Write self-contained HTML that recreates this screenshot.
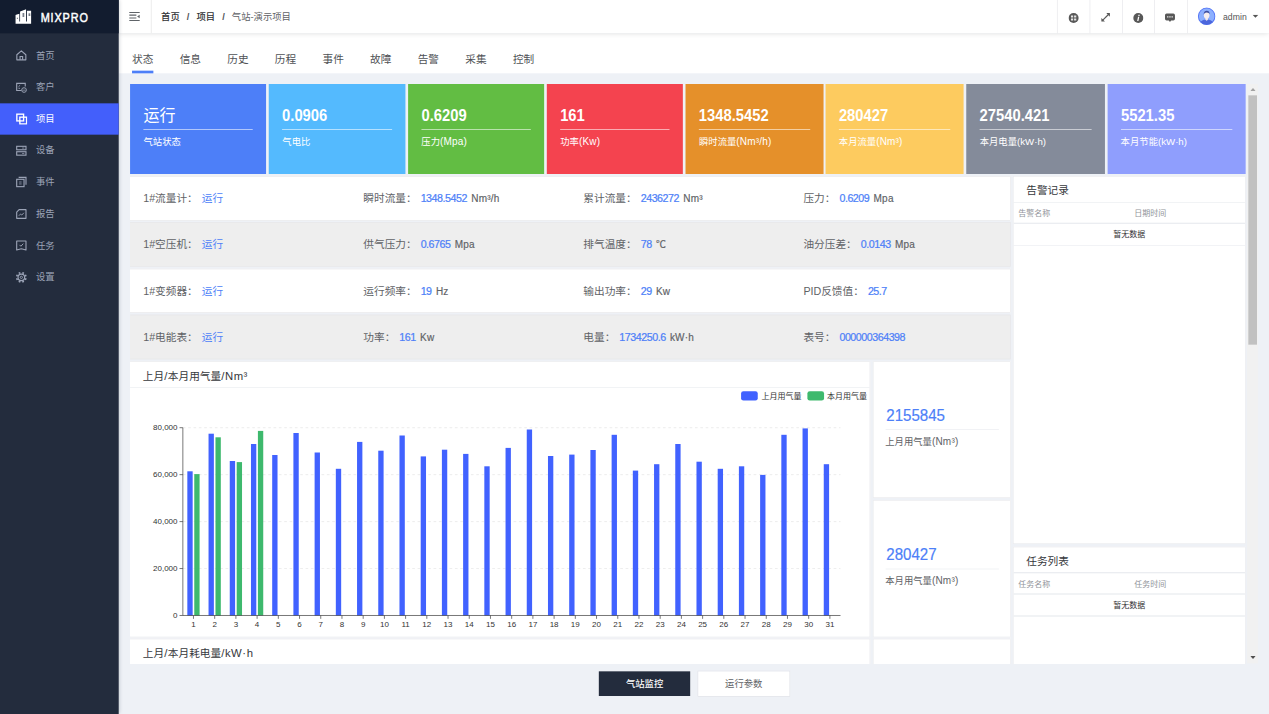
<!DOCTYPE html>
<html lang="zh-CN"><head><meta charset="utf-8"><title>MIXPRO</title>
<style>
html,body{margin:0;padding:0;width:1269px;height:714px;overflow:hidden;background:#eef1f6}
#app{position:absolute;left:0;top:0;width:1903px;height:1071px;transform:scale(.66684,.66667);transform-origin:0 0;overflow:hidden;background:#eef1f6;font-family:"Liberation Sans","Noto Sans CJK SC",sans-serif;color:#606266;font-size:14px}
#app div,#app svg,#app span.abs{position:absolute;box-sizing:border-box}
.side{left:0;top:0;width:178px;height:1071px;background:#232c3d;z-index:5;box-shadow:2px 0 6px rgba(0,21,41,.22)}
.logo{left:0;top:0;width:178px;height:50px;background:#121c2f}
.logo span{position:absolute;left:61px;top:0;line-height:52.5px;color:#fff;font-weight:normal;-webkit-text-stroke:.75px #fff;font-size:20px;letter-spacing:1.6px;transform:scaleX(.815);transform-origin:0 50%}
.mi{left:0;width:178px;height:47.5px;color:#9ba3b6}
.mi svg{left:22.5px;top:14.5px}
.mi span{position:absolute;left:54px;top:0;line-height:47px;font-size:14px}
.mi.act{background:#435ffb;color:#fff}
.hdr{left:178px;top:0;width:1725px;height:50px;background:#fff;box-shadow:0 1px 8px rgba(0,0,0,.17);z-index:3}
.bc{left:63.5px;top:0;line-height:50px;font-size:14px;color:#606266;white-space:nowrap}
.bc b{color:#303133;font-weight:500}
.bc i{font-style:normal;color:#505256;margin:0 10.6px;font-weight:bold}
.vsep{top:0;width:1px;height:50px;background:#e6e6ea}
.tabs{left:178px;top:50px;width:1725px;height:59.5px;background:#fff}
.tab{top:68px;font-size:16px;line-height:44px;color:#505256;white-space:nowrap}
.scroll{left:195px;top:126px;width:1692px;height:869.7px;overflow:hidden}
.card{top:126px;height:134.6px;color:#fff}
.cv{left:20px;top:27.5px;font-size:25px;line-height:36px;font-weight:bold;white-space:nowrap;transform:scaleX(.886);transform-origin:0 50%}
.cv.cn{font-weight:normal;font-size:24px;top:30px;transform:none}
.cl{left:20px;right:20px;top:67.5px;height:1.5px;background:rgba(255,255,255,.85)}
.ct{left:20px;top:74.6px;font-size:14px;line-height:22px;white-space:nowrap}
.ct span{font-size:15px;letter-spacing:.25px}
.ct span.k{font-size:14.5px;letter-spacing:0}
.row{left:-0.8px;width:1321.8px;height:66.9px;border:1px solid #e7e8ea}
.cell{top:-1px;font-size:16px;white-space:nowrap;color:#606266}
.cell .v{color:#4d7ff8;font-size:16px;margin-left:6px;letter-spacing:-.7px;-webkit-text-stroke:.35px #4d7ff8}
.cell .v.vc{margin-left:6px;letter-spacing:0;-webkit-text-stroke:0}
.cell .u{font-size:15px;color:#606266;letter-spacing:.3px;margin-left:2px;-webkit-text-stroke:.25px #606266}
.panel{background:#fff;border:1px solid #eaebee}
.pt{left:19px;font-size:16px;color:#36383c;white-space:nowrap}
.hl{left:0;right:0;height:1.5px;background:#ebedf1}
.pt i{font-style:normal;font-size:17px;letter-spacing:.8px}
.th{font-size:12px;color:#909399;white-space:nowrap;line-height:20px}
.nd{left:0;right:0;text-align:center;font-size:12px;color:#303133;line-height:20px}
.sv{left:19px;font-size:25.3px;color:#4d7ff8;line-height:30px;white-space:nowrap;letter-spacing:0;-webkit-text-stroke:.3px #4d7ff8;transform:scaleX(.895);transform-origin:0 50%}
.sl{left:18px;right:17px;height:1.2px;background:#ebecf0}
.st i{font-style:normal;font-size:15px;letter-spacing:.3px}
.st{left:18px;font-size:14px;color:#606266;line-height:20px;white-space:nowrap}
text.ax{font-family:"Liberation Sans",sans-serif;font-size:12px;fill:#333}
text.lg{font-family:"Liberation Sans","Noto Sans CJK SC",sans-serif;font-size:12px;fill:#333}
.btn{top:1006.5px;height:37.5px;width:136.5px;text-align:center;line-height:36px;font-size:14px}
</style></head><body>
<div id="app">
 <div class="side">
  <div class="logo">
   <svg style="left:22.5px;top:13px" width="24" height="23" viewBox="0 0 24 23"><path d="M0 9.600 6 7.600V19.100h1.100V4.200L16.100 1V19.100h1.300V3.100H24V22.800H0z" fill="#fff"/><path d="M10.800 6.800h2.600v2.200h-2.600zM10.800 9.900h2.600v2.200h-2.600zM19.800 7.400h2.700v1.300h-2.700zM19.800 9.300h2.700v1.300h-2.700zM2.300 13.700h1.600v1.600H2.300z" fill="#121c2f" opacity=".75"/></svg>
   <span>MIXPRO</span>
  </div>
<div class="mi" style="top:59.5px"><svg width="18" height="18" viewBox="0 0 16 16"><path d="M2 7.2 8 2l6 5.2V14H2z" fill="none" stroke="currentColor" stroke-width="1.5" stroke-linejoin="round"/><path d="M6.3 14V9.6h3.4V14" fill="none" stroke="currentColor" stroke-width="1.5"/></svg><span>首页</span></div>
<div class="mi" style="top:107.0px"><svg width="18" height="18" viewBox="0 0 16 16"><path d="M13.2 7V2.8H1.8v9.4H8" fill="none" stroke="currentColor" stroke-width="1.5"/><path d="M4.2 7.2l2.2-2 M4.2 9.3h2" stroke="currentColor" stroke-width="1.2" fill="none"/><circle cx="11.6" cy="11.6" r="3.1" fill="none" stroke="currentColor" stroke-width="1.3"/><path d="M10 12.6c.8-1.6 2.4-1.6 3.2 0" stroke="currentColor" stroke-width="1" fill="none"/></svg><span>客户</span></div>
<div class="mi act" style="top:154.5px"><svg width="18" height="18" viewBox="0 0 16 16"><rect x="2" y="2" width="9" height="9" fill="none" stroke="currentColor" stroke-width="1.8"/><rect x="6" y="6" width="9" height="9" fill="none" stroke="currentColor" stroke-width="1.8"/></svg><span>项目</span></div>
<div class="mi" style="top:202.0px"><svg width="18" height="18" viewBox="0 0 16 16"><rect x="1.8" y="2.2" width="12.4" height="4.6" fill="none" stroke="currentColor" stroke-width="1.5"/><rect x="1.8" y="9.4" width="12.4" height="4.6" fill="none" stroke="currentColor" stroke-width="1.5"/><path d="M9 4.5h3M9 11.700h3" stroke="currentColor" stroke-width="1"/></svg><span>设备</span></div>
<div class="mi" style="top:249.5px"><svg width="18" height="18" viewBox="0 0 16 16"><rect x="1.8" y="4.4" width="9.8" height="9.8" fill="none" stroke="currentColor" stroke-width="1.5"/><path d="M4.4 1.8h9.8v9.8" fill="none" stroke="currentColor" stroke-width="1.5"/><path d="M5 8h3.4M5 10.6h3.4" stroke="currentColor" stroke-width="1"/></svg><span>事件</span></div>
<div class="mi" style="top:297.0px"><svg width="18" height="18" viewBox="0 0 16 16"><path d="M5 2.2h9.2v11.6H1.8V5.4z" fill="none" stroke="currentColor" stroke-width="1.5" stroke-linejoin="round"/><path d="M4.6 10.4l2.4-2.4 1.6 1.4 2.8-3" fill="none" stroke="currentColor" stroke-width="1.2"/></svg><span>报告</span></div>
<div class="mi" style="top:344.5px"><svg width="18" height="18" viewBox="0 0 16 16"><path d="M1.8 2.2h12.4v12l-6.2-1.6-6.2 1.6z" fill="none" stroke="currentColor" stroke-width="1.5" stroke-linejoin="round"/><path d="M5.6 7.4l1.8 1.8 3.2-3.4" fill="none" stroke="currentColor" stroke-width="1.3"/></svg><span>任务</span></div>
<div class="mi" style="top:392.0px"><svg width="18" height="18" viewBox="0 0 16 16"><circle cx="8" cy="8" r="4.4" fill="none" stroke="currentColor" stroke-width="1.6"/><circle cx="8" cy="8" r="1.5" fill="none" stroke="currentColor" stroke-width="1.2"/><g stroke="currentColor" stroke-width="2.4"><line x1="12.80" y1="9.99" x2="14.74" y2="10.79"/><line x1="9.99" y1="12.80" x2="10.79" y2="14.74"/><line x1="6.01" y1="12.80" x2="5.21" y2="14.74"/><line x1="3.20" y1="9.99" x2="1.26" y2="10.79"/><line x1="3.20" y1="6.01" x2="1.26" y2="5.21"/><line x1="6.01" y1="3.20" x2="5.21" y2="1.26"/><line x1="9.99" y1="3.20" x2="10.79" y2="1.26"/><line x1="12.80" y1="6.01" x2="14.74" y2="5.21"/></g></svg><span>设置</span></div>
 </div>
 <div class="hdr">
  <svg style="left:15px;top:17px" width="18" height="16" viewBox="0 0 18 16"><path d="M0.900 1.700H16.500M0.900 5.700H11.500M0.900 9.900H11.500M0.900 13.750H16.500" stroke="#5f6368" stroke-width="1.600" fill="none"/><path d="M16.500 5v5.300L12.600 7.650z" fill="#5f6368"/></svg>
  <div class="vsep" style="left:48.3px;background:#f0f0f0;width:1.500px"></div>
  <div class="bc"><b>首页</b><i>/</i><b>项目</b><i>/</i>气站-演示项目</div>
  <div class="vsep" style="left:1406.5px"></div>
  <div class="vsep" style="left:1456px"></div>
  <div class="vsep" style="left:1504.5px"></div>
  <div class="vsep" style="left:1553px"></div>
  <div class="vsep" style="left:1601.5px"></div>
  <svg style="left:1423.5px;top:18.5px" width="16" height="16" viewBox="0 0 16 16"><circle cx="8" cy="8" r="7.5" fill="#585858"/><path d="M4 4.3h3.3v3H4zM8.7 4.3H12v3H8.7zM4 8.7h3.3v3H4zM8.7 8.7H12v3H8.7z" fill="#fff" opacity=".85"/></svg>
  <svg style="left:1471.5px;top:18px" width="16" height="16" viewBox="0 0 16 16"><path d="M3 13 13 3" stroke="#585858" stroke-width="1.7"/><path d="M9 1.6H14.4V7zM1.6 9V14.4H7z" fill="#585858"/></svg>
  <svg style="left:1520.5px;top:18.5px" width="16" height="16" viewBox="0 0 16 16"><circle cx="8" cy="8" r="7.5" fill="#585858"/><path d="M8.3 3.2h1.9l-.4 1.8H7.9zM7.6 6.2h1.9l-1.3 6.3H6.3z" fill="#fff"/></svg>
  <svg style="left:1568px;top:18.5px" width="17" height="16" viewBox="0 0 17 16"><path d="M3.5 1.2h10a2.5 2.5 0 0 1 2.5 2.5v5.600a2.500 2.500 0 0 1-2.500 2.500h-3.300l-1.700 2.200-1.700-2.200h-3.300A2.500 2.500 0 0 1 1 9.300V3.700a2.500 2.500 0 0 1 2.500-2.500z" fill="#585858"/><path d="M4.200 5.500h2v1.800h-2zM7.500 5.500h2v1.800h-2zM10.800 5.500h2v1.800h-2z" fill="#fff" opacity=".9"/></svg>
  <svg style="left:1617.5px;top:11px" width="27" height="27" viewBox="0 0 27 27"><circle cx="13.5" cy="13.5" r="12.4" fill="#8db0fe" stroke="#5677f6" stroke-width="1.5"/><path d="M4.300 22C6 19.300 9 18.600 11.600 18.200L13.500 19.600 15.400 18.200C18 18.600 21 19.300 22.700 22A12.400 12.400 0 0 1 4.300 22z" fill="#4c66dc"/><path d="M11.600 15h3.800v3.600l-1.900 1.400-1.900-1.400z" fill="#f1e6e6"/><ellipse cx="13.500" cy="11.800" rx="4.200" ry="5.200" fill="#f6eeee"/><path d="M9.200 11c-.5-3.800 1.600-6 4.500-6s4.800 2 4.200 5.600c-.8-1.900-2-2.500-4.300-2.700-2.200.2-3.600 1-4.400 3.100z" fill="#3f4f9f"/></svg>
  <span class="abs" style="left:1656px;top:0;line-height:51px;font-size:13px;color:#555;letter-spacing:.05px">admin</span>
  <svg style="left:1699.5px;top:22px" width="10" height="6" viewBox="0 0 10 6"><path d="M0.300 0h8.800L4.700 4.500z" fill="#555"/></svg>
 </div>
 <div class="tabs"></div>
 <div class="tab" style="left:198.0px">状态</div><div class="tab" style="left:269.4px">信息</div><div class="tab" style="left:340.8px">历史</div><div class="tab" style="left:412.2px">历程</div><div class="tab" style="left:483.6px">事件</div><div class="tab" style="left:555.0px">故障</div><div class="tab" style="left:626.4px">告警</div><div class="tab" style="left:697.8px">采集</div><div class="tab" style="left:769.2px">控制</div>
 <div style="left:198px;top:106px;width:32px;height:3.5px;background:#4d7ff8"></div>

 <div class="scroll">
  <div style="left:-195px;top:-126px;width:1903px;height:1400px">
<div class="card" style="left:195.15px;width:204.15px;background:#4d7ff8"><div class="cv cn">运行</div><div class="cl"></div><div class="ct">气站状态</div></div>
<div class="card" style="left:403.35px;width:204.6px;background:#54bafe"><div class="cv">0.0906</div><div class="cl"></div><div class="ct">气电比</div></div>
<div class="card" style="left:611.85px;width:204.15px;background:#62bd43"><div class="cv">0.6209</div><div class="cl"></div><div class="ct">压力<span>(Mpa)</span></div></div>
<div class="card" style="left:820.2px;width:203.7px;background:#f4434f"><div class="cv">161</div><div class="cl"></div><div class="ct">功率<span>(Kw)</span></div></div>
<div class="card" style="left:1028.25px;width:206.25px;background:#e5902a"><div class="cv">1348.5452</div><div class="cl"></div><div class="ct">瞬时流量<span>(Nm³/h)</span></div></div>
<div class="card" style="left:1237.95px;width:207.45px;background:#fdcb5f"><div class="cv">280427</div><div class="cl"></div><div class="ct">本月流量<span>(Nm³)</span></div></div>
<div class="card" style="left:1449.15px;width:207.6px;background:#848b9a"><div class="cv">27540.421</div><div class="cl"></div><div class="ct">本月电量<span class="k">(kW·h)</span></div></div>
<div class="card" style="left:1660.5px;width:207.45px;background:#8f9efd"><div class="cv">5521.35</div><div class="cl"></div><div class="ct">本月节能<span class="k">(kW·h)</span></div></div>
   <div style="left:195px;top:0;width:1320.6px;height:0">
<div class="row" style="top:264.15px;height:66.9px;line-height:68.5px;background:#fff"><div class="cell" style="left:19.6px"><span class="k">1#流量计：</span><span class="v vc">运行</span><span class="u"></span></div><div class="cell" style="left:349.6px"><span class="k">瞬时流量：</span><span class="v">1348.5452</span><span class="u"> Nm³/h</span></div><div class="cell" style="left:679.5999999999999px"><span class="k">累计流量：</span><span class="v">2436272</span><span class="u"> Nm³</span></div><div class="cell" style="left:1009.5999999999999px"><span class="k">压力：</span><span class="v">0.6209</span><span class="u"> Mpa</span></div></div>
<div class="row" style="top:333.3px;height:66.9px;line-height:68.5px;background:#eeeeee"><div class="cell" style="left:19.6px"><span class="k">1#空压机：</span><span class="v vc">运行</span><span class="u"></span></div><div class="cell" style="left:349.6px"><span class="k">供气压力：</span><span class="v">0.6765</span><span class="u"> Mpa</span></div><div class="cell" style="left:679.5999999999999px"><span class="k">排气温度：</span><span class="v">78</span><span class="u"> ℃</span></div><div class="cell" style="left:1009.5999999999999px"><span class="k">油分压差：</span><span class="v">0.0143</span><span class="u"> Mpa</span></div></div>
<div class="row" style="top:402.6px;height:66.9px;line-height:68.5px;background:#fff"><div class="cell" style="left:19.6px"><span class="k">1#变频器：</span><span class="v vc">运行</span><span class="u"></span></div><div class="cell" style="left:349.6px"><span class="k">运行频率：</span><span class="v">19</span><span class="u"> Hz</span></div><div class="cell" style="left:679.5999999999999px"><span class="k">输出功率：</span><span class="v">29</span><span class="u"> Kw</span></div><div class="cell" style="left:1009.5999999999999px"><span class="k">PID反馈值：</span><span class="v">25.7</span><span class="u"></span></div></div>
<div class="row" style="top:471.75px;height:66.9px;line-height:68.5px;background:#eeeeee"><div class="cell" style="left:19.6px"><span class="k">1#电能表：</span><span class="v vc">运行</span><span class="u"></span></div><div class="cell" style="left:349.6px"><span class="k">功率：</span><span class="v">161</span><span class="u"> Kw</span></div><div class="cell" style="left:679.5999999999999px"><span class="k">电量：</span><span class="v">1734250.6</span><span class="u"> kW·h</span></div><div class="cell" style="left:1009.5999999999999px"><span class="k">表号：</span><span class="v">000000364398</span><span class="u"></span></div></div>
   </div>
   <!-- chart panel 1 -->
   <div class="panel" style="left:194.2px;top:541.6px;width:1111px;height:414.2px">
    <div class="pt" style="top:0;line-height:43px">上月<i>/</i>本月用气量<i>/</i><i>Nm³</i></div>
    <div class="hl" style="top:38px"></div>
   </div>
<svg class="chart" style="left:195.0px;top:582.0px" width="1109.4" height="373.2" viewBox="0 0 1109.4 373.2">
<line x1="79.2" x2="1065.45" y1="270.82" y2="270.82" stroke="#e4e4e4" stroke-dasharray="4 4" stroke-width="1"/>
<line x1="79.2" x2="1065.45" y1="200.4" y2="200.4" stroke="#e4e4e4" stroke-dasharray="4 4" stroke-width="1"/>
<line x1="79.2" x2="1065.45" y1="129.97" y2="129.97" stroke="#e4e4e4" stroke-dasharray="4 4" stroke-width="1"/>
<line x1="79.2" x2="1065.45" y1="59.55" y2="59.55" stroke="#e4e4e4" stroke-dasharray="4 4" stroke-width="1"/>
<rect x="85.91" y="124.95" width="8" height="216.3" fill="#4162ff"/>
<rect x="117.72" y="68.55" width="8" height="272.7" fill="#4162ff"/>
<rect x="149.54" y="109.5" width="8" height="231.75" fill="#4162ff"/>
<rect x="181.35" y="84.0" width="8" height="257.25" fill="#4162ff"/>
<rect x="213.17" y="100.5" width="8" height="240.75" fill="#4162ff"/>
<rect x="244.98" y="67.5" width="8" height="273.75" fill="#4162ff"/>
<rect x="276.79" y="96.75" width="8" height="244.5" fill="#4162ff"/>
<rect x="308.61" y="121.2" width="8" height="220.05" fill="#4162ff"/>
<rect x="340.42" y="80.85" width="8" height="260.4" fill="#4162ff"/>
<rect x="372.24" y="94.05" width="8" height="247.2" fill="#4162ff"/>
<rect x="404.05" y="71.25" width="8" height="270.0" fill="#4162ff"/>
<rect x="435.87" y="102.6" width="8" height="238.65" fill="#4162ff"/>
<rect x="467.68" y="92.55" width="8" height="248.7" fill="#4162ff"/>
<rect x="499.5" y="98.85" width="8" height="242.4" fill="#4162ff"/>
<rect x="531.31" y="117.45" width="8" height="223.8" fill="#4162ff"/>
<rect x="563.13" y="89.85" width="8" height="251.4" fill="#4162ff"/>
<rect x="594.94" y="62.25" width="8" height="279.0" fill="#4162ff"/>
<rect x="626.75" y="102.0" width="8" height="239.25" fill="#4162ff"/>
<rect x="658.57" y="99.9" width="8" height="241.35" fill="#4162ff"/>
<rect x="690.38" y="93.0" width="8" height="248.25" fill="#4162ff"/>
<rect x="722.2" y="70.2" width="8" height="271.05" fill="#4162ff"/>
<rect x="754.01" y="123.9" width="8" height="217.35" fill="#4162ff"/>
<rect x="785.83" y="114.3" width="8" height="226.95" fill="#4162ff"/>
<rect x="817.64" y="84.0" width="8" height="257.25" fill="#4162ff"/>
<rect x="849.46" y="110.55" width="8" height="230.7" fill="#4162ff"/>
<rect x="881.27" y="121.2" width="8" height="220.05" fill="#4162ff"/>
<rect x="913.08" y="117.45" width="8" height="223.8" fill="#4162ff"/>
<rect x="944.9" y="130.35" width="8" height="210.9" fill="#4162ff"/>
<rect x="976.71" y="70.2" width="8" height="271.05" fill="#4162ff"/>
<rect x="1008.53" y="60.6" width="8" height="280.65" fill="#4162ff"/>
<rect x="1040.34" y="114.3" width="8" height="226.95" fill="#4162ff"/>
<rect x="96.31" y="129.15" width="8" height="212.1" fill="#3eb96d"/>
<rect x="128.12" y="73.95" width="8" height="267.3" fill="#3eb96d"/>
<rect x="159.94" y="111.15" width="8" height="230.1" fill="#3eb96d"/>
<rect x="191.75" y="64.35" width="8" height="276.9" fill="#3eb96d"/>
<line x1="79.2" x2="79.2" y1="59.55" y2="341.25" stroke="#333" stroke-width="1"/>
<line x1="79.2" x2="1065.45" y1="341.25" y2="341.25" stroke="#333" stroke-width="1"/>
<line x1="74.2" x2="79.2" y1="341.25" y2="341.25" stroke="#333" stroke-width="1"/>
<text x="71.2" y="345.25" text-anchor="end" class="ax">0</text>
<line x1="74.2" x2="79.2" y1="270.82" y2="270.82" stroke="#333" stroke-width="1"/>
<text x="71.2" y="274.82" text-anchor="end" class="ax">20,000</text>
<line x1="74.2" x2="79.2" y1="200.4" y2="200.4" stroke="#333" stroke-width="1"/>
<text x="71.2" y="204.4" text-anchor="end" class="ax">40,000</text>
<line x1="74.2" x2="79.2" y1="129.97" y2="129.97" stroke="#333" stroke-width="1"/>
<text x="71.2" y="133.97" text-anchor="end" class="ax">60,000</text>
<line x1="74.2" x2="79.2" y1="59.55" y2="59.55" stroke="#333" stroke-width="1"/>
<text x="71.2" y="63.55" text-anchor="end" class="ax">80,000</text>
<line x1="95.11" x2="95.11" y1="341.25" y2="346.25" stroke="#333" stroke-width="1"/>
<line x1="126.92" x2="126.92" y1="341.25" y2="346.25" stroke="#333" stroke-width="1"/>
<line x1="158.74" x2="158.74" y1="341.25" y2="346.25" stroke="#333" stroke-width="1"/>
<line x1="190.55" x2="190.55" y1="341.25" y2="346.25" stroke="#333" stroke-width="1"/>
<line x1="222.37" x2="222.37" y1="341.25" y2="346.25" stroke="#333" stroke-width="1"/>
<line x1="254.18" x2="254.18" y1="341.25" y2="346.25" stroke="#333" stroke-width="1"/>
<line x1="285.99" x2="285.99" y1="341.25" y2="346.25" stroke="#333" stroke-width="1"/>
<line x1="317.81" x2="317.81" y1="341.25" y2="346.25" stroke="#333" stroke-width="1"/>
<line x1="349.62" x2="349.62" y1="341.25" y2="346.25" stroke="#333" stroke-width="1"/>
<line x1="381.44" x2="381.44" y1="341.25" y2="346.25" stroke="#333" stroke-width="1"/>
<line x1="413.25" x2="413.25" y1="341.25" y2="346.25" stroke="#333" stroke-width="1"/>
<line x1="445.07" x2="445.07" y1="341.25" y2="346.25" stroke="#333" stroke-width="1"/>
<line x1="476.88" x2="476.88" y1="341.25" y2="346.25" stroke="#333" stroke-width="1"/>
<line x1="508.7" x2="508.7" y1="341.25" y2="346.25" stroke="#333" stroke-width="1"/>
<line x1="540.51" x2="540.51" y1="341.25" y2="346.25" stroke="#333" stroke-width="1"/>
<line x1="572.33" x2="572.33" y1="341.25" y2="346.25" stroke="#333" stroke-width="1"/>
<line x1="604.14" x2="604.14" y1="341.25" y2="346.25" stroke="#333" stroke-width="1"/>
<line x1="635.95" x2="635.95" y1="341.25" y2="346.25" stroke="#333" stroke-width="1"/>
<line x1="667.77" x2="667.77" y1="341.25" y2="346.25" stroke="#333" stroke-width="1"/>
<line x1="699.58" x2="699.58" y1="341.25" y2="346.25" stroke="#333" stroke-width="1"/>
<line x1="731.4" x2="731.4" y1="341.25" y2="346.25" stroke="#333" stroke-width="1"/>
<line x1="763.21" x2="763.21" y1="341.25" y2="346.25" stroke="#333" stroke-width="1"/>
<line x1="795.03" x2="795.03" y1="341.25" y2="346.25" stroke="#333" stroke-width="1"/>
<line x1="826.84" x2="826.84" y1="341.25" y2="346.25" stroke="#333" stroke-width="1"/>
<line x1="858.66" x2="858.66" y1="341.25" y2="346.25" stroke="#333" stroke-width="1"/>
<line x1="890.47" x2="890.47" y1="341.25" y2="346.25" stroke="#333" stroke-width="1"/>
<line x1="922.28" x2="922.28" y1="341.25" y2="346.25" stroke="#333" stroke-width="1"/>
<line x1="954.1" x2="954.1" y1="341.25" y2="346.25" stroke="#333" stroke-width="1"/>
<line x1="985.91" x2="985.91" y1="341.25" y2="346.25" stroke="#333" stroke-width="1"/>
<line x1="1017.73" x2="1017.73" y1="341.25" y2="346.25" stroke="#333" stroke-width="1"/>
<line x1="1049.54" x2="1049.54" y1="341.25" y2="346.25" stroke="#333" stroke-width="1"/>
<text x="95.11" y="358.75" text-anchor="middle" class="ax">1</text>
<text x="126.92" y="358.75" text-anchor="middle" class="ax">2</text>
<text x="158.74" y="358.75" text-anchor="middle" class="ax">3</text>
<text x="190.55" y="358.75" text-anchor="middle" class="ax">4</text>
<text x="222.37" y="358.75" text-anchor="middle" class="ax">5</text>
<text x="254.18" y="358.75" text-anchor="middle" class="ax">6</text>
<text x="285.99" y="358.75" text-anchor="middle" class="ax">7</text>
<text x="317.81" y="358.75" text-anchor="middle" class="ax">8</text>
<text x="349.62" y="358.75" text-anchor="middle" class="ax">9</text>
<text x="381.44" y="358.75" text-anchor="middle" class="ax">10</text>
<text x="413.25" y="358.75" text-anchor="middle" class="ax">11</text>
<text x="445.07" y="358.75" text-anchor="middle" class="ax">12</text>
<text x="476.88" y="358.75" text-anchor="middle" class="ax">13</text>
<text x="508.7" y="358.75" text-anchor="middle" class="ax">14</text>
<text x="540.51" y="358.75" text-anchor="middle" class="ax">15</text>
<text x="572.33" y="358.75" text-anchor="middle" class="ax">16</text>
<text x="604.14" y="358.75" text-anchor="middle" class="ax">17</text>
<text x="635.95" y="358.75" text-anchor="middle" class="ax">18</text>
<text x="667.77" y="358.75" text-anchor="middle" class="ax">19</text>
<text x="699.58" y="358.75" text-anchor="middle" class="ax">20</text>
<text x="731.4" y="358.75" text-anchor="middle" class="ax">21</text>
<text x="763.21" y="358.75" text-anchor="middle" class="ax">22</text>
<text x="795.03" y="358.75" text-anchor="middle" class="ax">23</text>
<text x="826.84" y="358.75" text-anchor="middle" class="ax">24</text>
<text x="858.66" y="358.75" text-anchor="middle" class="ax">25</text>
<text x="890.47" y="358.75" text-anchor="middle" class="ax">26</text>
<text x="922.28" y="358.75" text-anchor="middle" class="ax">27</text>
<text x="954.1" y="358.75" text-anchor="middle" class="ax">28</text>
<text x="985.91" y="358.75" text-anchor="middle" class="ax">29</text>
<text x="1017.73" y="358.75" text-anchor="middle" class="ax">30</text>
<text x="1049.54" y="358.75" text-anchor="middle" class="ax">31</text>
<rect x="916.35" y="4.699999999999999" width="25" height="14" rx="3.5" fill="#4162ff"/>
<text x="947.1" y="16.2" class="lg">上月用气量</text>
<rect x="1015.8" y="4.699999999999999" width="25" height="14" rx="3.5" fill="#3eb96d"/>
<text x="1045.05" y="16.2" class="lg">本月用气量</text>
</svg>
   <!-- stat panels -->
   <div class="panel" style="left:1308.5px;top:541.6px;width:207.5px;height:205.5px">
    <div class="sv" style="top:65px">2155845</div>
    <div class="sl" style="top:101.5px"></div>
    <div class="st" style="top:110px">上月用气量<i>(Nm³)</i></div>
   </div>
   <div class="panel" style="left:1308.5px;top:750px;width:207.5px;height:205.8px">
    <div class="sv" style="top:65px">280427</div>
    <div class="sl" style="top:101.5px"></div>
    <div class="st" style="top:110px">本月用气量<i>(Nm³)</i></div>
   </div>
   <!-- chart panel 2 (clipped) -->
   <div class="panel" style="left:194.2px;top:957.7px;width:1111px;height:300px">
    <div class="pt" style="top:0;line-height:43px">上月<i>/</i>本月耗电量<i>/</i><i>kW·h</i></div>
   </div>
   <div class="panel" style="left:1308.5px;top:957.7px;width:207.5px;height:205.5px"></div>
   <!-- alarm panel -->
   <div class="panel" style="left:1519px;top:264.2px;width:349px;height:552.1px">
    <div class="pt" style="top:0;line-height:42.5px">告警记录</div>
    <div class="hl" style="top:37.5px"></div>
    <div class="th" style="left:7px;top:44.5px">告警名称</div>
    <div class="th" style="left:181px;top:44.5px">日期时间</div>
    <div class="hl" style="top:69px"></div>
    <div class="nd" style="top:76.5px">暂无数据</div>
    <div class="hl" style="top:102.5px"></div>
   </div>
   <!-- task panel -->
   <div class="panel" style="left:1519px;top:819.5px;width:349px;height:400px">
    <div class="pt" style="top:0;line-height:43px">任务列表</div>
    <div class="hl" style="top:37.5px"></div>
    <div class="th" style="left:7px;top:45px">任务名称</div>
    <div class="th" style="left:181px;top:45px">任务时间</div>
    <div class="hl" style="top:69.5px"></div>
    <div class="nd" style="top:77px">暂无数据</div>
    <div class="hl" style="top:102.5px"></div>
   </div>
  </div>
  <!-- scrollbar -->
  <div style="right:0;top:0;width:17px;height:869px;background:#f1f1f1">
   <svg style="left:4.5px;top:6px" width="8" height="5" viewBox="0 0 8 5"><path d="M0 4.5h8L4 0z" fill="#a3a3a3"/></svg>
   <div style="left:2px;top:16.5px;width:13px;height:374px;background:#c1c1c1"></div>
   <svg style="left:4.5px;top:858px" width="8" height="5" viewBox="0 0 8 5"><path d="M0 0h8L4 4.5z" fill="#505050"/></svg>
  </div>
 </div>
 <div class="btn" style="left:898.2px;width:136.8px;top:1006.6px;height:37.2px;background:#232c3d;color:#fff;font-weight:500">气站监控</div>
 <div class="btn" style="left:1046px;width:138.7px;top:1005.6px;height:39.3px;line-height:37px;background:#fff;color:#606266;border:1.5px solid #dcdfe6">运行参数</div>
</div>
</body></html>
